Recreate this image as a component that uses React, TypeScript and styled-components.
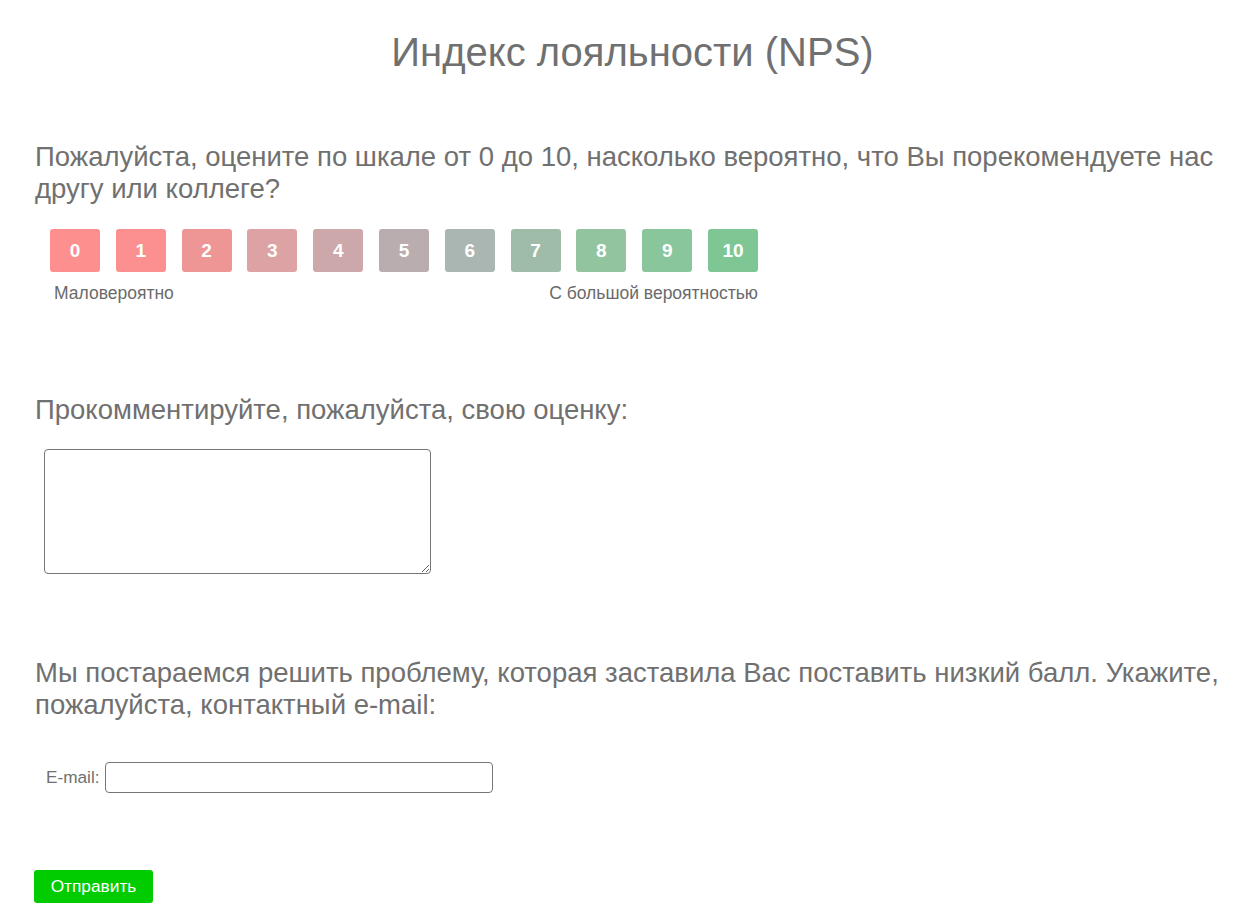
import React from "react";
import styled, { createGlobalStyle } from "styled-components";

const Global = createGlobalStyle`
  html, body { margin: 0; padding: 0; background: #fff; }
  body { font-family: "Liberation Sans", Arial, sans-serif; color: #707070; }
  * { box-sizing: border-box; }
`;

const Page = styled.div`
  width: 1251px;
  padding: 28px 0 0 35px;
`;

const Title = styled.h1`
  margin: 0 0 0 -35px;
  padding-left: 14px;
  text-align: center;
  font-weight: normal;
  font-size: 40px;
  line-height: 48px;
  color: #707070;
`;

const Section = styled.section<{ $top: number }>`
  margin-top: ${(p) => p.$top}px;
`;

const Question = styled.p`
  margin: 0;
  font-size: 27.5px;
  line-height: 32px;
  color: #707070;
  max-width: 1200px;
`;

const Scale = styled.div`
  margin: 24px 0 0 15px;
  width: 708px;
`;

const Buttons = styled.div`
  display: flex;
  gap: 15.8px;
`;

const ScoreButton = styled.div<{ $bg: string }>`
  width: 50px;
  height: 43px;
  border-radius: 3px;
  background: ${(p) => p.$bg};
  color: #fff;
  font-weight: bold;
  font-size: 19px;
  display: flex;
  align-items: center;
  justify-content: center;
`;

const Labels = styled.div`
  display: flex;
  justify-content: space-between;
  margin-top: 11px;
  padding-left: 4px;
  font-size: 17.5px;
  line-height: 20px;
  color: #6a6a6a;
`;

const TextArea = styled.textarea`
  display: block;
  margin: 23px 0 0 9px;
  width: 387px;
  height: 125px;
  border: 1px solid #767676;
  border-radius: 4px;
  resize: both;
  font-family: inherit;
`;

const EmailRow = styled.div`
  display: flex;
  align-items: center;
  gap: 6px;
  margin: 41px 0 0 11px;
  font-size: 17.2px;
  color: #707070;
`;

const Input = styled.input`
  width: 388px;
  height: 31px;
  border: 1px solid #767676;
  border-radius: 4px;
  font-family: inherit;
`;

const Submit = styled.button`
  display: block;
  margin: 77px 0 0 -1px;
  width: 119px;
  height: 33px;
  border: none;
  border-radius: 3px;
  background: #00cc00;
  color: #fff;
  font-family: "Liberation Sans", Arial, sans-serif;
  font-size: 17.3px;
  padding: 0;
`;

const colors = [
  "#fe8f8f",
  "#fc8f8f",
  "#ee9596",
  "#dda2a3",
  "#cca8ab",
  "#b9adb0",
  "#aab6b2",
  "#9fbca8",
  "#92c4a0",
  "#8ac69b",
  "#7ec795",
];

export default function App() {
  return (
    <Page>
      <Global />
      <Title>Индекс лояльности (NPS)</Title>
      <Section $top={65}>
        <Question>
          Пожалуйста, оцените по шкале от 0 до 10, насколько вероятно, что Вы порекомендуете нас другу или коллеге?
        </Question>
        <Scale>
          <Buttons>
            {colors.map((c, i) => (
              <ScoreButton key={i} $bg={c}>
                {i}
              </ScoreButton>
            ))}
          </Buttons>
          <Labels>
            <span>Маловероятно</span>
            <span>С большой вероятностью</span>
          </Labels>
        </Scale>
      </Section>
      <Section $top={91}>
        <Question>Прокомментируйте, пожалуйста, свою оценку:</Question>
        <TextArea />
      </Section>
      <Section $top={83}>
        <Question>
          Мы постараемся решить проблему, которая заставила Вас поставить низкий балл. Укажите, пожалуйста, контактный e-mail:
        </Question>
        <EmailRow>
          <span>E-mail:</span>
          <Input type="text" />
        </EmailRow>
      </Section>
      <Submit>Отправить</Submit>
    </Page>
  );
}
